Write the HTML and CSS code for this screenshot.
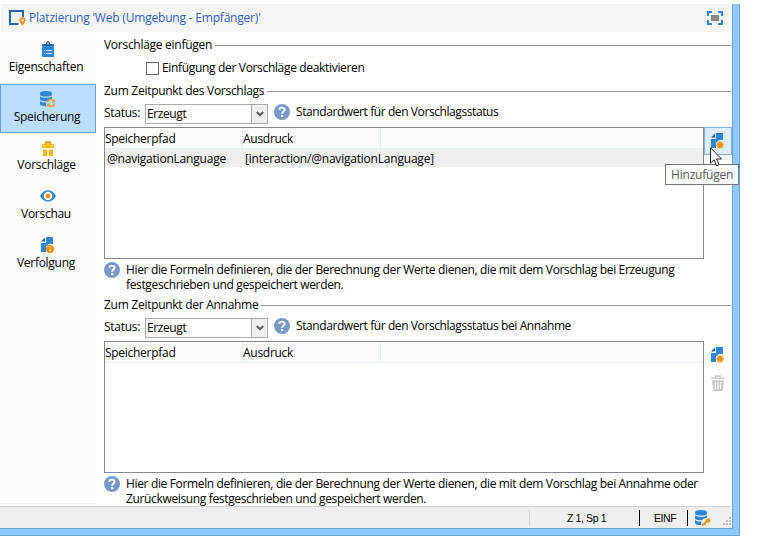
FILE: index.html
```html
<!DOCTYPE html>
<html lang="de">
<head>
<meta charset="utf-8">
<title>Platzierung</title>
<link rel="stylesheet" href="styles.css">
</head>
<body>
<svg class="defs" width="0" height="0">
  <symbol id="help" viewBox="0 0 16 16"><circle cx="8" cy="8" r="8" fill="#7799c8"/><path d="M5.300 5.800C5.400 2.800 10.700 2.900 10.600 5.900C10.500 7.700 8.100 7.600 8.100 9.800" fill="none" stroke="#fff" stroke-width="1.900"/><rect x="7" y="11" width="2.200" height="2.100" fill="#fff"/></symbol>
  <symbol id="page" viewBox="0 0 14 16"><path d="M5 0H12V7H8L5 9.500V15H0V6H5z" fill="#2e86d4"/><path d="M0 4.600L4 .4V4.600z" fill="#1f64a8"/></symbol>
  <symbol id="add" viewBox="0 0 14 16"><use href="#page" width="14" height="16"/><path d="M9 7.800V16M4.900 11.900H13.100M6.100 9L11.900 14.800M11.900 9L6.100 14.800" stroke="#f6bd6a" stroke-width="1.700"/><circle cx="9" cy="11.900" r="2.900" fill="#ee930c"/></symbol>
  <symbol id="db" viewBox="0 0 16 16"><path d="M0 2.300C0 .8 2.500 0 6 0s6 .8 6 2.300v1.200C12 5 9.500 5.600 6 5.600S0 5 0 3.500z" fill="#2e86d4"/><path d="M0 5.200c2.300 2 9.700 2 12 0v2.600c-3 .5-4 1.500-5 2.500C3 10.300 0 9.600 0 8.200zM0 10c1.700 1.400 4 1.600 6.200 1.500v3.700C3 15.200 0 14.500 0 13z" fill="#2e86d4"/></symbol>
</svg>
<div class="window">
  <header class="titlebar">
    <svg class="logo" width="18" height="17" viewBox="0 0 18 17"><path d="M9.500 14H1V1H14V7" fill="none" stroke="#2766a8" stroke-width="2"/><path d="M13.500 7.300a3 3 0 0 1 3 3c0 2-3 5.400-3 5.400s-3-3.400-3-5.400a3 3 0 0 1 3-3z" fill="#ee930c"/><circle cx="13.500" cy="10.200" r="1.100" fill="#fff"/></svg>
    <span class="t title">Platzierung 'Web (Umgebung - Empfänger)'</span>
    <svg class="full" width="16" height="14" viewBox="0 0 16 14"><path d="M1 5V1H5M11 1H15V5M15 9V13H11M5 13H1V9" fill="none" stroke="#2e86d4" stroke-width="2"/><rect x="4" y="4" width="8" height="6" fill="#888"/></svg>
  </header>
  <div class="body">
    <nav class="side">
      <a class="item"><svg width="12" height="16" viewBox="0 0 12 16"><path d="M0 3H12V16H0z" fill="#2e86d4"/><path d="M2 3h2c0-3.800 4-3.800 4 0h2v2H2z" fill="#1d5f9e"/><circle cx="6" cy="2.200" r=".8" fill="#fff"/><path d="M2 9.500h1M4 9.500h6M2 12.500h1M4 12.500h6" stroke="#b9dcfa"/></svg><span class="t">Eigenschaften</span></a>
      <a class="item on"><svg width="16" height="16" viewBox="0 0 16 16"><use href="#db" width="16" height="16"/><path d="M7.500 11.200C8 7.800 12 7.600 13.700 9.700M14.500 12.600C14 16 10 16.200 8.300 14.200" fill="none" stroke="#ed9e2c" stroke-width="1.500"/><path d="M15.200 8v3.500h-3.600zM7 16v-3.600h3.500z" fill="#ed9e2c"/></svg><span class="t">Speicherung</span></a>
      <a class="item v"><svg width="12" height="16" viewBox="0 0 12 16"><path d="M0 4h12v4H0zM1 9.500h4.300V16H1zM6.700 9.500H11V16H6.700z" fill="#efba0c"/><path d="M2.200 3.800L3.200 1l1.800.7L6 0l1 1.700L8.800 1l1 2.800z" fill="#ee930c"/><path d="M6 3v1.500M2 6h2M8 6h2" stroke="#fff6d0" stroke-width=".8"/></svg><span class="t">Vorschläge</span></a>
      <a class="item w"><svg width="16" height="12" viewBox="0 0 16 12"><path d="M0 6C3.500-1.600 12.500-1.600 16 6C12.500 13.600 3.500 13.600 0 6z" fill="#2e86d4"/><circle cx="8" cy="6" r="4.200" fill="#fff"/><circle cx="8" cy="6" r="2.400" fill="#ee930c"/></svg><span class="t">Vorschau</span></a>
      <a class="item x"><svg width="14" height="16" viewBox="0 0 14 16"><use href="#page" width="14" height="16"/><circle cx="9" cy="12" r="4.200" fill="#ee930c"/><path d="M9 9.300v1.300M9 11.400v3.200" stroke="#ffe2ae" stroke-width="1.300"/></svg><span class="t">Verfolgung</span></a>
    </nav>
    <main class="main">
      <div class="section"><span class="t">Vorschläge einfügen</span><i></i></div>
      <label class="check"><b></b><span class="t">Einfügung der Vorschläge deaktivieren</span></label>
      <div class="section"><span class="t">Zum Zeitpunkt des Vorschlags</span><i></i></div>
      <div class="status"><span class="t">Status:</span><div class="select"><span class="t">Erzeugt</span><em><svg width="8" height="6" viewBox="0 0 8 6"><path d="M.8 1L4 4.200L7.200 1" fill="none" stroke="#555" stroke-width="2"/></svg></em></div><svg class="q" width="16" height="16"><use href="#help"/></svg><span class="t note">Standardwert für den Vorschlagsstatus</span></div>
      <div class="grid">
        <div class="table"><div class="head"><span class="t">Speicherpfad</span><span class="t">Ausdruck</span></div><div class="row"><span class="t">@navigationLanguage</span><span class="t">[interaction/@navigationLanguage]</span></div></div>
        <div class="tools"><button class="tool hot"><svg width="14" height="16"><use href="#add"/></svg></button></div>
      </div>
      <div class="help"><svg width="16" height="16"><use href="#help"/></svg><p class="t">Hier die Formeln definieren, die der Berechnung der Werte dienen, die mit dem Vorschlag bei Erzeugung<br>festgeschrieben und gespeichert werden.</p></div>
      <div class="section"><span class="t">Zum Zeitpunkt der Annahme</span><i></i></div>
      <div class="status"><span class="t">Status:</span><div class="select"><span class="t">Erzeugt</span><em><svg width="8" height="6" viewBox="0 0 8 6"><path d="M.8 1L4 4.200L7.200 1" fill="none" stroke="#555" stroke-width="2"/></svg></em></div><svg class="q" width="16" height="16"><use href="#help"/></svg><span class="t note">Standardwert für den Vorschlagsstatus bei Annahme</span></div>
      <div class="grid">
        <div class="table"><div class="head"><span class="t">Speicherpfad</span><span class="t">Ausdruck</span></div></div>
        <div class="tools"><button class="tool"><svg width="14" height="16"><use href="#add"/></svg></button><button class="tool"><svg width="14" height="16" viewBox="0 0 14 16"><path d="M0 2.500h4V.3h6v2.200h4v1.600H0zM1 5.200h12L12 16H2z" fill="#cbcbcb"/><path d="M5.500 2.400h3" stroke="#fff"/><path d="M4.500 7v7M7 7v7M9.500 7v7" stroke="#f4f4f4" stroke-width="1.200"/></svg></button></div>
      </div>
      <div class="help"><svg width="16" height="16"><use href="#help"/></svg><p class="t">Hier die Formeln definieren, die der Berechnung der Werte dienen, die mit dem Vorschlag bei Annahme oder<br>Zurückweisung festgeschrieben und gespeichert werden.</p></div>
    </main>
  </div>
  <footer class="foot">
    <span class="pos">Z 1, Sp 1</span><span class="ins">EINF</span>
    <svg class="key" width="16" height="16" viewBox="0 0 16 16"><use href="#db" width="16" height="16"/><circle cx="13" cy="10.500" r="2.300" fill="#ee930c"/><path d="M11.700 11.500L7 15.500M9 13.500l1.500 1.800" stroke="#ee930c" stroke-width="1.700"/></svg>
    <svg class="grip" width="8" height="8" viewBox="0 0 8 8"><path d="M6 0h2v2H6zM3 3h2v2H3zM6 3h2v2H6zM0 6h2v2H0zM3 6h2v2H3zM6 6h2v2H6z" fill="#bdbdbd"/></svg>
  </footer>
  <div class="tip"><span class="t">Hinzufügen</span></div>
  <svg class="cursor" width="13" height="20" viewBox="0 0 13 20"><path d="M.5.800V16.200L4.100 12.800L6.600 18.700L9.100 17.600L6.600 12H11.600z" fill="#fff" stroke="#222"/></svg>
</div>
</body>
</html>
```
FILE: styles.css
```css
* { box-sizing: border-box; }
body { margin: 0; background: #fff; font: 12px/15px "Open Sans", "Noto Sans", sans-serif; color: #000; overflow: hidden; }
.defs { position: absolute; }
svg { display: block; flex: none; }
.t { white-space: nowrap; letter-spacing: -0.28px; }
.window { position: relative; margin-top: 4px; width: 740px; height: 532px; background: #fff; border-right: 1px solid #6ba3d2; border-bottom: 1px solid #6ba3d2; padding: 0 7px 7px 0; display: flex; flex-direction: column; box-shadow: inset -6px -6px #8ec8fc, inset -7px -7px #6ba3d2; }
.titlebar { height: 28px; margin: 0 1px; background: #f5f5f5; display: flex; align-items: center; padding: 0 8px; }
.logo { margin-top: 1px; }
.title { color: #2f5fc0; margin-left: 2px; margin-top: -1px; letter-spacing: -0.2px; }
.full { margin-left: auto; }
.body { height: 474px; display: flex; }
.side { width: 96px; flex: none; margin-top: 3px; height: 469px; background: #fcfcfc; border-bottom: 1px solid #eceef4; }
.item { display: flex; flex-direction: column; align-items: center; height: 49px; padding-top: 6px; gap: 2px; }
.item .t { margin-right: 4px; }
.item.on { background: #bbdeff; border: 1px solid #62a4e8; }
.item.on .t { margin-right: 2px; }
.item.v { padding-top: 7px; gap: 1px; }
.item.v .t { margin-right: 3px; }
.item.w { padding-top: 8px; gap: 4px; }
.item.x { padding-top: 6px; gap: 2px; }
.main { width: 636px; flex: none; padding-left: 8px; padding-top: 4px; height: 474px; }
.section { height: 18px; display: flex; align-items: center; gap: 3px; margin-right: 1px; }
.section .t { margin-top: -1px; }
.section i { flex: 1; height: 1px; background: #999; margin-top: 1px; }
.check { height: 28px; padding-left: 42px; display: flex; align-items: center; gap: 3px; }
.check b { width: 13px; height: 13px; border: 1px solid #666; }
.check .t { margin-top: -1px; letter-spacing: -0.33px; }
.status { height: 27px; display: flex; align-items: flex-start; }
.status > .t:first-child { width: 41px; margin-top: 5px; }
.status > .note { margin-top: 4px; letter-spacing: -0.41px; }
.select { width: 123px; height: 20px; margin-top: 4px; border: 1px solid #aaa; display: flex; justify-content: space-between; align-items: center; padding-left: 1px; }
.select .t { letter-spacing: -0.4px; margin-top: -1px; }
.select em { width: 16px; height: 18px; background: #efefef; border-left: 1px solid #aaa; display: flex; align-items: center; justify-content: center; }
.q { margin: 4px 6px 0 6px; }
.grid { height: 132px; display: flex; }
.table { flex: 1; border: 1px solid #828790; }
.head { height: 21px; background: #fcfcfc; border-bottom: 1px solid #e5effb; display: flex; }
.head span { width: 138px; padding: 3px 0 0; border-right: 1px solid #e5effb; }
.row { height: 18px; background: #efefef; display: flex; align-items: center; padding-left: 2px; }
.row span { width: 138px; letter-spacing: -0.21px; }
.tools { width: 28px; }
.tool { display: flex; width: 28px; height: 28px; padding: 0; border: 1px solid transparent; background: none; align-items: center; justify-content: center; }
.tool.hot { background: #dcedfd; border-color: #7fb3e8; }
.help { height: 37px; display: flex; gap: 6px; padding-top: 3px; }
.help p { margin: 0; letter-spacing: -0.35px; }
.foot { height: 22px; background: #efefef; border-top: 1px solid #d5d5d5; display: flex; align-items: center; font: 10.5px "Liberation Sans", sans-serif; margin-right: 1px; }
.pos { width: 111px; height: 16px; line-height: 16px; margin-left: 529px; border-left: 1px solid #d5d5d5; border-right: 1px solid #000; padding-left: 37px; letter-spacing: -0.38px; }
.ins { width: 48px; height: 16px; line-height: 16px; padding-left: 14px; border-right: 1px solid #000; letter-spacing: -0.4px; }
.key { margin-left: 7px; }
.grip { margin: 7px 0 0 12px; }
.tip { position: absolute; left: 665px; top: 160px; width: 74px; height: 21px; border: 1px solid #767676; background: #fff; color: #575757; padding: 2px 5px; }
.tip .t { letter-spacing: -0.2px; }
.cursor { position: absolute; left: 710px; top: 143px; }
```
